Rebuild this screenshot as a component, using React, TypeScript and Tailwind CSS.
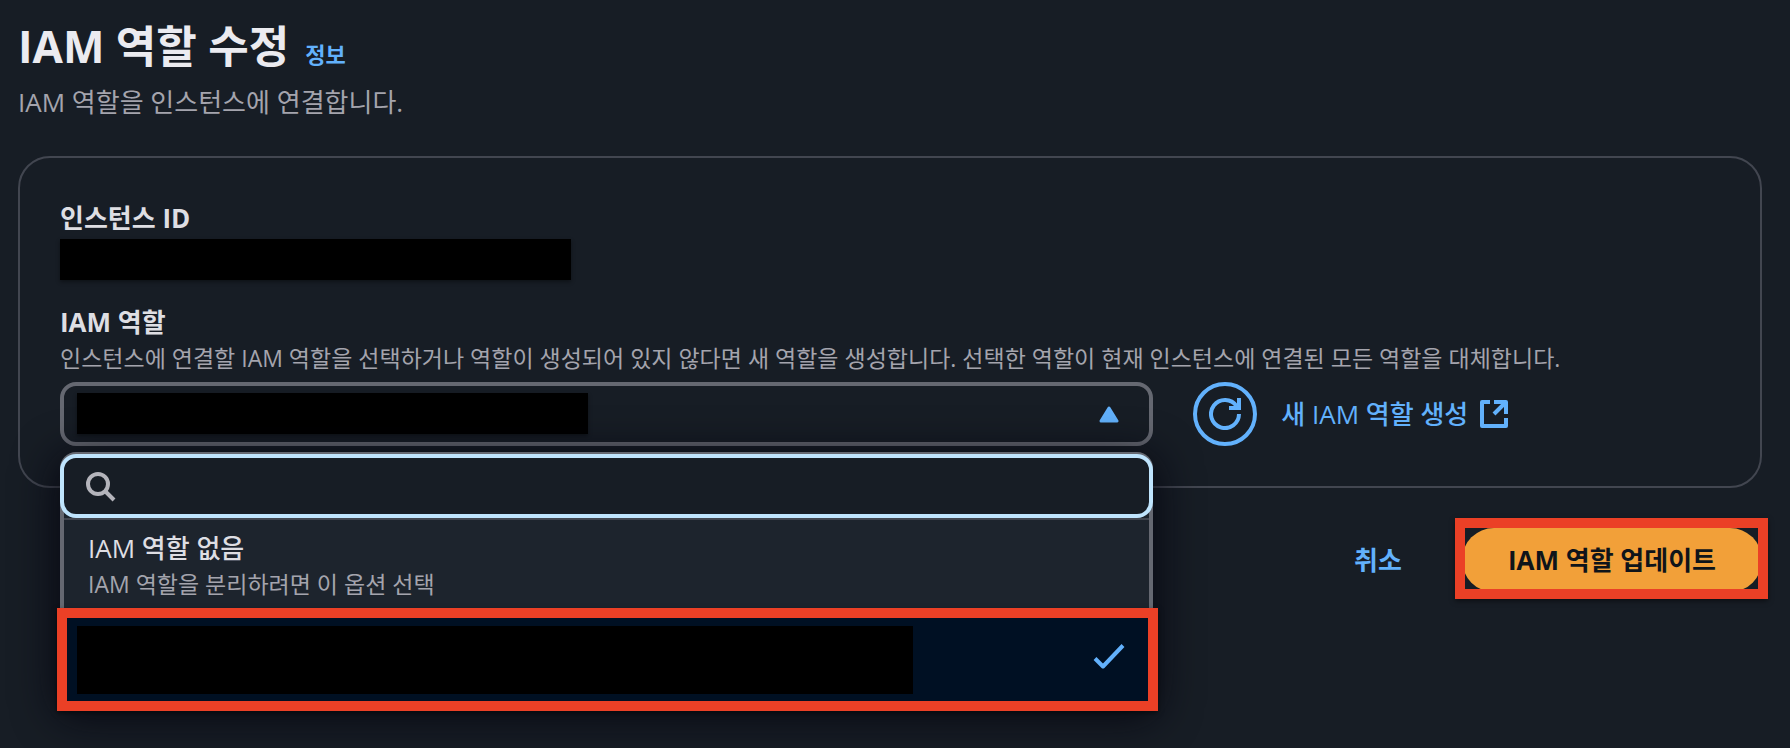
import React, { useState } from "react";

interface IconProps {
  className?: string;
}

function CaretUpIcon({ className }: IconProps) {
  return (
    <svg className={className} width="20" height="17" viewBox="0 0 20 17" aria-hidden="true">
      <path d="M10 2 18 15H2z" fill="currentColor" stroke="currentColor" strokeWidth="3" strokeLinejoin="round" />
    </svg>
  );
}

function RefreshIcon() {
  return (
    <svg width="32" height="32" viewBox="0 0 32 32" fill="none" stroke="currentColor" strokeWidth="4" aria-hidden="true">
      <path d="M30 16A14 14 0 1 1 27.6 8.2" />
      <path d="M30 0v10H20" />
    </svg>
  );
}

function ExternalIcon() {
  return (
    <svg width="28" height="28" viewBox="0 0 28 28" fill="none" stroke="currentColor" strokeWidth="4" strokeLinejoin="round" aria-hidden="true">
      <path d="M10 2H2v24h24v-8" />
      <path d="M14 2h12v12" />
      <path d="M26 2 14 14" />
    </svg>
  );
}

function SearchIcon({ className }: IconProps) {
  return (
    <svg className={className} width="30" height="30" viewBox="0 0 30 30" fill="none" stroke="currentColor" strokeWidth="4" aria-hidden="true">
      <circle cx="12" cy="12" r="10" />
      <path d="M19 19l9 9" />
    </svg>
  );
}

function CheckIcon() {
  return (
    <svg width="32" height="32" viewBox="0 0 32 32" fill="none" stroke="currentColor" strokeWidth="4" strokeLinejoin="round" aria-hidden="true">
      <path d="M2 14.5 10 22.5 30 1.5" />
    </svg>
  );
}

function RoleDropdown() {
  const [query, setQuery] = useState("");

  return (
    <div className="absolute inset-x-0 top-full mt-[6px] rounded-2xl border-x-4 border-t-2 border-[#656871] bg-[#1d242d] shadow-[0_8px_40px_6px_rgba(5,5,15,0.8)]">
      {/* the focused search box covers the side borders of the panel */}
      <div className="relative -mx-1">
        <SearchIcon className="absolute left-[26px] top-[18px] text-[#b4b4bb]" />
        <input
          type="text"
          aria-label="IAM 역할 검색"
          value={query}
          onChange={(e) => setQuery(e.target.value)}
          className="block h-16 w-full rounded-2xl border-4 border-[#bfe4fd] bg-[#171d25] pl-16 pr-6 text-[26px] text-[#dedee3] outline-none"
        />
      </div>

      <ul role="listbox" aria-label="IAM 역할">
        <li role="option" aria-selected="false" className="h-24 border-t-2 border-[#424650] px-6 pt-2.5">
          <div className="text-[26px] font-medium leading-9 text-[#dedee3]">IAM 역할 없음</div>
          <div className="text-[23px] leading-9 text-[#a4a4ad]">IAM 역할을 분리하려면 이 옵션 선택</div>
        </li>
        <li
          role="option"
          aria-selected="true"
          className="relative flex h-[91px] items-center justify-between bg-[#001023] pl-[13px] pr-6 text-[#62b1fc]"
        >
          <div className="h-[68px] w-[836px] bg-black" />
          <CheckIcon />
          <span className="absolute -bottom-[6px] -left-[7px] -right-[9px] -top-[6px] border-10 border-[#eb4026] shadow-[0_2px_5px_rgba(0,0,0,0.5)]" />
        </li>
      </ul>
    </div>
  );
}

export default function App() {
  return (
    <main className="min-h-screen bg-[#171d25] pb-10 pl-[18px] pr-7 pt-4 font-['Open_Sans','Noto_Sans_CJK_KR',sans-serif] text-[26px] text-[#dedee3]">
      <header>
        <div className="flex items-baseline gap-4">
          <h1 className="text-[44px] font-bold leading-[60px] text-[#ebebf0]">IAM 역할 수정</h1>
          <a href="#info" className="text-[22px] font-semibold text-[#62b1fc]">
            정보
          </a>
        </div>
        <p className="mt-1 leading-[44px] text-[#a4a4ad]">IAM 역할을 인스턴스에 연결합니다.</p>
      </header>

      <section className="mt-8 rounded-4xl border-2 border-[#424650] p-10">
        <div className="font-bold leading-10">인스턴스 ID</div>
        <div className="mt-px h-[41px] w-[511px] bg-black shadow-[0_2px_4px_rgba(0,0,0,0.4)]" />

        <label htmlFor="iam-role" className="mt-[22px] block font-bold leading-10">
          IAM 역할
        </label>
        <p className="text-[23px] leading-8 text-[#a4a4ad]">
          인스턴스에 연결할 IAM 역할을 선택하거나 역할이 생성되어 있지 않다면 새 역할을 생성합니다. 선택한 역할이 현재 인스턴스에 연결된 모든 역할을 대체합니다.
        </p>

        <div className="mt-2 grid grid-cols-3 gap-10">
          <div className="relative col-span-2">
            <select
              id="iam-role"
              className="block h-16 w-full appearance-none rounded-2xl border-4 border-[#656871] bg-[#171d25] px-5 outline-none"
            >
              <option value="current" aria-label="IAM 역할" />
            </select>
            <div className="pointer-events-none absolute left-[17px] top-[11px] h-[41px] w-[511px] bg-black shadow-[0_2px_4px_rgba(0,0,0,0.4)]" />
            <CaretUpIcon className="pointer-events-none absolute right-[34px] top-6 text-[#62b1fc]" />
            <RoleDropdown />
          </div>

          <div className="flex items-center gap-6 text-[#62b1fc]">
            <button
              type="button"
              aria-label="새로 고침"
              className="flex size-16 shrink-0 items-center justify-center rounded-full border-4 border-[#62b1fc]"
            >
              <RefreshIcon />
            </button>
            <a href="#create-role" className="flex items-center gap-3 whitespace-nowrap font-medium">
              새 IAM 역할 생성
              <ExternalIcon />
            </a>
          </div>
        </div>
      </section>

      <footer className="mt-10 flex items-center justify-end gap-4">
        <button type="button" className="h-16 px-11 font-bold text-[#62b1fc]">
          취소
        </button>
        <div className="relative">
          <button type="button" className="h-16 rounded-full bg-[#f2a039] px-[46px] font-bold text-[#0f141a]">
            IAM 역할 업데이트
          </button>
          <span className="pointer-events-none absolute -bottom-[7px] -left-[7px] -right-[6px] -top-[10px] border-10 border-[#eb4026] shadow-[0_2px_5px_rgba(0,0,0,0.5)]" />
        </div>
      </footer>
    </main>
  );
}
